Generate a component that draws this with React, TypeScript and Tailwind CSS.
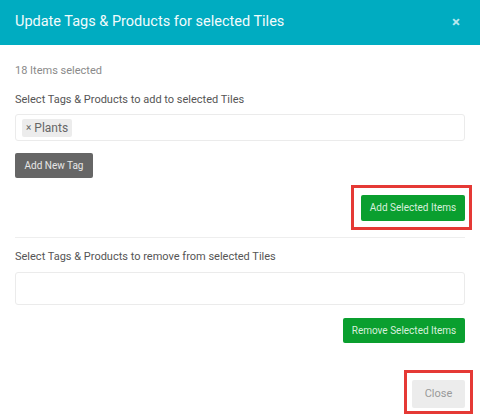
import React from 'react';

// Red marker drawn around a button to call it out
const Highlight: React.FC<{ className: string; children: React.ReactNode }> = ({ className, children }) => (
  <div className="relative">
    {children}
    <span className={`pointer-events-none absolute border-[3px] border-[#e53935] ${className}`} />
  </div>
);

export default function App() {
  return (
    <div className="w-[480px] h-[415px] bg-white overflow-hidden" style={{ fontFamily: 'Roboto, "Liberation Sans", sans-serif' }}>
      <div className="h-[45px] bg-[#00acc1] flex items-center justify-between pl-[15px] pr-[20px]">
        <h1 className="text-[14.5px] text-[#f2fbfc] leading-none">Update Tags &amp; Products for selected Tiles</h1>
        <button className="text-[#b8e8ef] text-[15px] leading-none font-bold">×</button>
      </div>

      <div className="px-[15px]">
        <p className="mt-[18px] text-[11px] leading-[16px] text-[#8a8a8a]">18 Items selected</p>

        <p className="mt-[13px] text-[11px] leading-[16px] text-[#555]">Select Tags &amp; Products to add to selected Tiles</p>
        <div className="mt-[6px] h-[27px] border border-[#ebebeb] rounded-[3px] flex items-center px-[6px]">
          <span className="h-[18px] flex items-center px-[4px] bg-[#ececec] rounded-[2px] text-[12px] text-[#666]">
            <span className="text-[10px] mr-[3px]">×</span>Plants
          </span>
        </div>

        <button className="mt-[12px] h-[25px] w-[78px] bg-[#666] rounded-[2px] text-[10px] text-[#e6e6e6]">Add New Tag</button>

        <div className="mt-[16px] flex justify-end">
          <Highlight className="-left-[10px] -right-[7px] -top-[9px] -bottom-[9px]">
            <button className="h-[26px] w-[104px] bg-[#0a9f2f] rounded-[2px] text-[10px] text-[#d8efdc]">Add Selected Items</button>
          </Highlight>
        </div>

        <div className="mt-[16px] h-px bg-[#eee]" />

        <p className="mt-[11px] text-[11px] leading-[16px] text-[#555]">Select Tags &amp; Products to remove from selected Tiles</p>
        <div className="mt-[7px] h-[33px] border border-[#ebebeb] rounded-[3px]" />

        <div className="mt-[13px] flex justify-end">
          <button className="h-[25px] w-[122px] bg-[#0a9f2f] rounded-[2px] text-[10px] text-[#d8efdc]">Remove Selected Items</button>
        </div>

        <div className="mt-[37px] flex justify-end">
          <Highlight className="-left-[8px] -right-[8px] -top-[10px] -bottom-[6px]">
            <button className="h-[28px] w-[53px] bg-[#ececec] rounded-[2px] text-[11px] text-[#999]">Close</button>
          </Highlight>
        </div>
      </div>
    </div>
  );
}
